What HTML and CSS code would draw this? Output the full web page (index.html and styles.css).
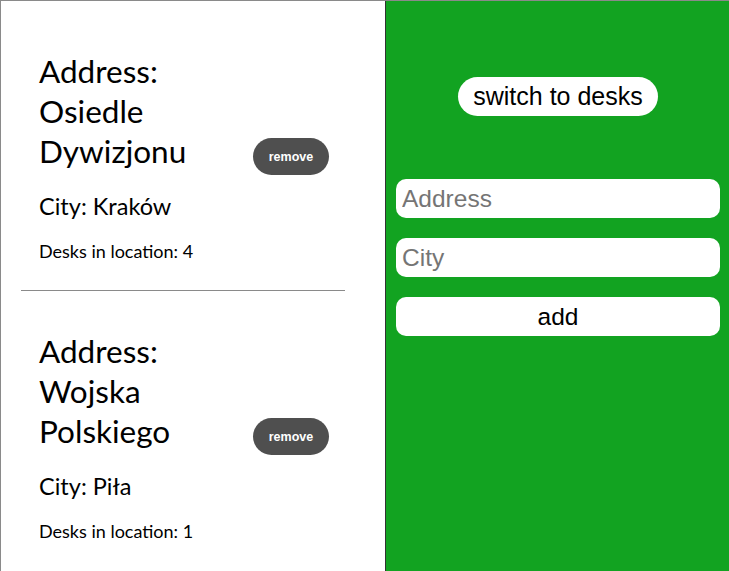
FILE: index.html
```html
<!DOCTYPE html>
<html lang="en">
<head>
<meta charset="utf-8">
<title>Locations</title>
<link rel="stylesheet" href="styles.css">
</head>
<body>
<div class="page">
  <div class="list">
    <div class="card">
      <div class="info">
        <h1 class="address">Address: Osiedle Dywizjonu</h1>
        <p class="city">City: Kraków</p>
        <p class="desks">Desks in location: 4</p>
      </div>
      <button class="remove">remove</button>
    </div>
    <div class="card">
      <div class="info">
        <h1 class="address">Address: Wojska Polskiego</h1>
        <p class="city">City: Piła</p>
        <p class="desks">Desks in location: 1</p>
      </div>
      <button class="remove">remove</button>
    </div>
  </div>
  <div class="side">
    <button class="switch">switch to desks</button>
    <form class="form">
      <input class="field" type="text" placeholder="Address">
      <input class="field" type="text" placeholder="City">
      <button class="add" type="button">add</button>
    </form>
  </div>
</div>
</body>
</html>
```

FILE: styles.css
```css
html, body {
  margin: 0;
  padding: 0;
  height: 100%;
  overflow: hidden;
  background: #ffffff;
}

.page {
  display: flex;
  height: 100%;
  box-sizing: border-box;
  border-top: 1px solid #8a8a8a;
  border-left: 1px solid #8a8a8a;
}

.list {
  width: 384px;
  flex: 0 0 384px;
  box-sizing: border-box;
  padding: 10px 20px 0 20px;
  background: #ffffff;
}

.card {
  width: 324px;
  box-sizing: border-box;
  display: flex;
  align-items: center;
  padding: 40px 16px 28px 18px;
  font-family: Lato, "Liberation Sans", sans-serif;
  color: #000;
}

.card + .card {
  border-top: 1px solid #8a8a8a;
}

.info {
  flex: 1 1 auto;
  min-width: 0;
}

.address {
  margin: 0;
  font-size: 31.5px;
  font-weight: 400;
  line-height: 40px;
}

.city {
  margin: 22px 0 0 0;
  font-size: 23.5px;
  line-height: 27px;
}

.desks {
  margin: 20px 0 0 0;
  font-size: 18px;
  line-height: 22px;
}

.remove {
  flex: 0 0 76px;
  width: 76px;
  height: 37px;
  border: none;
  border-radius: 19px;
  background: #4f4f4f;
  color: #ffffff;
  font-family: "Liberation Sans", Arial, sans-serif;
  font-weight: 700;
  font-size: 12.5px;
  padding: 0;
}

.side {
  flex: 1 1 auto;
  display: flex;
  flex-direction: column;
  align-items: center;
  background: #12a321;
  border-left: 1px solid #333333;
  padding: 0 9px 0 10px;
}

.switch {
  margin-top: 76px;
  height: 39px;
  padding: 0 15px;
  border: none;
  border-radius: 20px;
  background: #ffffff;
  color: #000;
  font-family: "Liberation Sans", Arial, sans-serif;
  font-size: 25px;
}

.form {
  margin-top: 63px;
  width: 100%;
  display: flex;
  flex-direction: column;
  gap: 20px;
}

.field, .add {
  width: 100%;
  height: 39px;
  box-sizing: border-box;
  border: none;
  border-radius: 10px;
  background: #ffffff;
  font-family: "Liberation Sans", Arial, sans-serif;
  font-size: 24.5px;
  color: #000;
  margin: 0;
}

.field {
  padding: 0 6px;
  outline: none;
}

.field::placeholder {
  color: #757575;
}

.add {
  padding: 0;
  text-align: center;
}
```
